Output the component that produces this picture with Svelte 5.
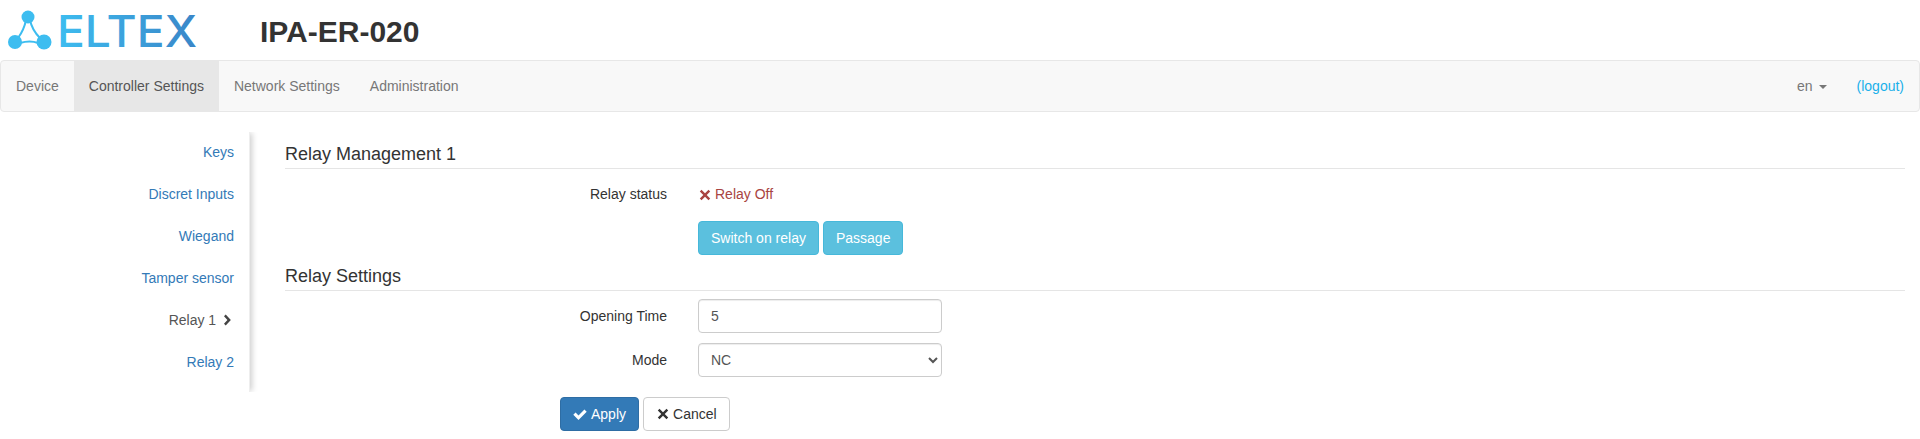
<script>
	const tabs = ['Device', 'Controller Settings', 'Network Settings', 'Administration'];
	const sideItems = ['Keys', 'Discret Inputs', 'Wiegand', 'Tamper sensor', 'Relay 1', 'Relay 2'];
	let openingTime = $state('5');
	let mode = $state('NC');
</script>

{#snippet okIcon()}
	<svg class="ico" viewBox="0 0 14 14" width="14" height="14"><path d="M.3 7.800l2.300-2.300 2.900 2.900 5.900-5.900 2.300 2.300-8.200 8.200z" fill="currentColor" /></svg>
{/snippet}

{#snippet removeIcon()}
	<svg class="ico" viewBox="0 0 14 14" width="14" height="14"><path d="M1.800 3.500l1.700-1.700L7 5.300l3.500-3.500 1.700 1.700L8.700 7l3.500 3.500-1.700 1.700L7 8.700l-3.500 3.500-1.700-1.700L5.300 7z" fill="currentColor" /></svg>
{/snippet}

<div class="page">
	<header class="top">
		<svg class="logo" viewBox="0 0 210 60" width="210" height="60" aria-label="Eltex logo">
			<defs>
				<linearGradient id="lg" x1="0" x2="1" y1="0" y2="0">
					<stop offset="0" stop-color="#3dbdf0" />
					<stop offset="1" stop-color="#3a86c8" />
				</linearGradient>
			</defs>
			<g stroke="#3dbdf0" stroke-width="2" fill="none">
				<path d="M26 20Q24 30 18 38" />
				<path d="M30 20Q32 30 40 38" />
				<path d="M20 43Q30 40 38 43" />
			</g>
			<g fill="#3dbdf0">
				<circle cx="28" cy="17" r="6.500" />
				<circle cx="15" cy="42" r="7" />
				<circle cx="44" cy="42" r="7.500" />
			</g>
			<text x="57" y="47" font-family="Inter, sans-serif" font-size="44" font-weight="500" fill="url(#lg)" textLength="140" lengthAdjust="spacingAndGlyphs">ELTEX</text>
		</svg>
		<h1>IPA-ER-020</h1>
	</header>

	<nav class="navbar">
		<ul class="tabs">
			{#each tabs as tab, i}
				<li class:active={i === 1}>{tab}</li>
			{/each}
		</ul>
		<div class="right">
			<span class="lang">en<span class="caret"></span></span>
			<a class="logout" href="#logout">(logout)</a>
		</div>
	</nav>

	<div class="body">
		<aside class="side">
			<ul>
				{#each sideItems as item}
					{#if item === 'Relay 1'}
						<li class="current">
							{item}
							<svg class="chev" viewBox="0 0 10 14" width="10" height="12"><path d="M1.500 2.500L3.500.5 9.500 7l-6 6.500-2-2L5.500 7z" fill="currentColor" /></svg>
						</li>
					{:else}
						<li><a href="#item">{item}</a></li>
					{/if}
				{/each}
			</ul>
		</aside>

		<main class="content">
			<h4 class="first">Relay Management 1</h4>
			<div class="row status">
				<span class="label">Relay status</span>
				<span class="off">{@render removeIcon()}Relay Off</span>
			</div>
			<div class="row actions">
				<span class="label"></span>
				<div class="btns">
					<button class="btn info">Switch on relay</button>
					<button class="btn info">Passage</button>
				</div>
			</div>
			<h4 class="second">Relay Settings</h4>
			<div class="row field">
				<label class="label" for="open-time">Opening Time</label>
				<input id="open-time" type="text" bind:value={openingTime} />
			</div>
			<div class="row field">
				<label class="label" for="mode">Mode</label>
				<select id="mode" bind:value={mode}>
					<option>NC</option>
					<option>NO</option>
				</select>
			</div>
			<div class="submit">
				<button class="btn primary">{@render okIcon()}Apply</button>
				<button class="btn plain">{@render removeIcon()}Cancel</button>
			</div>
		</main>
	</div>
</div>

<style>
	:global(body) {
		margin: 0;
		background: #fff;
	}

	.page {
		font-family: 'Liberation Sans', Arial, sans-serif;
		font-size: 14px;
		line-height: 20px;
		color: #333;
		height: 439px;
		overflow: hidden;
	}

	.top {
		display: flex;
		align-items: center;
		height: 60px;
	}

	.logo {
		display: block;
		flex: none;
	}

	h1 {
		margin: 0 0 0 50px;
		font-size: 30px;
		line-height: 33px;
		font-weight: 700;
		position: relative;
		top: 1px;
	}

	.navbar {
		display: flex;
		justify-content: space-between;
		align-items: center;
		height: 50px;
		border: 1px solid #e7e7e7;
		border-radius: 4px;
		background: #f8f8f8;
	}

	.tabs {
		display: flex;
		list-style: none;
		margin: 0;
		padding: 0;
		color: #777;
	}

	.tabs li {
		padding: 15px;
	}

	.tabs li.active {
		background: #e7e7e7;
		color: #555;
	}

	.right {
		display: flex;
		align-items: center;
		margin-right: 15px;
	}

	.lang {
		color: #777;
		margin-right: 30px;
	}

	.caret {
		display: inline-block;
		margin-left: 6px;
		vertical-align: middle;
		border-top: 4px solid #777;
		border-left: 4px solid transparent;
		border-right: 4px solid transparent;
	}

	.logout {
		color: #1ab0ea;
		text-decoration: none;
	}

	.body {
		display: flex;
		margin-top: 20px;
		align-items: flex-start;
	}

	.side {
		flex: none;
		width: 249px;
		height: 260px;
		border-right: 1px solid #eee;
		box-shadow: 3px 0 6px -1px rgba(0, 0, 0, 0.2);
		clip-path: inset(0 -12px 0 0);
	}

	.side ul {
		list-style: none;
		margin: 0;
		padding: 0;
		text-align: right;
	}

	.side li {
		height: 40px;
		margin-bottom: 2px;
		padding: 10px 15px 10px 0;
		box-sizing: border-box;
	}

	.side a {
		color: #337ab7;
		text-decoration: none;
	}

	.side li.current {
		padding-right: 17px;
		color: #555;
	}

	.chev {
		margin-left: 2px;
		vertical-align: -1px;
		color: #444;
	}

	.content {
		flex: 1;
		margin: 0 15px 0 35px;
	}

	h4 {
		margin: 0;
		font-size: 18px;
		font-weight: 400;
		line-height: 20px;
		border-bottom: 1px solid #e5e5e5;
		padding-bottom: 4px;
	}

	h4.first {
		margin-top: 12px;
	}

	h4.second {
		margin-top: 11px;
	}

	.row {
		display: grid;
		grid-template-columns: 382px 244px;
		column-gap: 31px;
		align-items: center;
	}

	.status {
		height: 34px;
		margin-top: 8px;
	}

	.actions {
		margin-top: 10px;
	}

	.field {
		margin-top: 10px;
	}

	h4 + .field {
		margin-top: 8px;
	}

	.label {
		text-align: right;
	}

	.off {
		color: #a94442;
		display: flex;
		align-items: center;
		gap: 3px;
	}

	.off .ico {
		position: relative;
		top: 1px;
	}

	.btns {
		display: flex;
		gap: 4px;
		white-space: nowrap;
	}

	.btn {
		font: inherit;
		height: 34px;
		padding: 6px 12px;
		border: 1px solid transparent;
		border-radius: 4px;
		box-sizing: border-box;
		display: inline-flex;
		align-items: center;
	}

	.info {
		background: #5bc0de;
		border-color: #46b8da;
		color: #fff;
	}

	.primary {
		background: #337ab7;
		border-color: #2e6da4;
		color: #fff;
		gap: 4px;
	}

	.plain {
		background: #fff;
		border-color: #ccc;
		color: #333;
		gap: 3px;
	}

	input,
	select {
		font: inherit;
		color: #555;
		width: 244px;
		height: 34px;
		padding: 6px 12px;
		background: #fff;
		border: 1px solid #ccc;
		border-radius: 4px;
		box-sizing: border-box;
		box-shadow: inset 0 1px 1px rgba(0, 0, 0, 0.075);
	}

	select {
		padding-left: 8px;
	}

	.submit {
		display: flex;
		gap: 4px;
		margin: 20px 0 0 275px;
	}
</style>
